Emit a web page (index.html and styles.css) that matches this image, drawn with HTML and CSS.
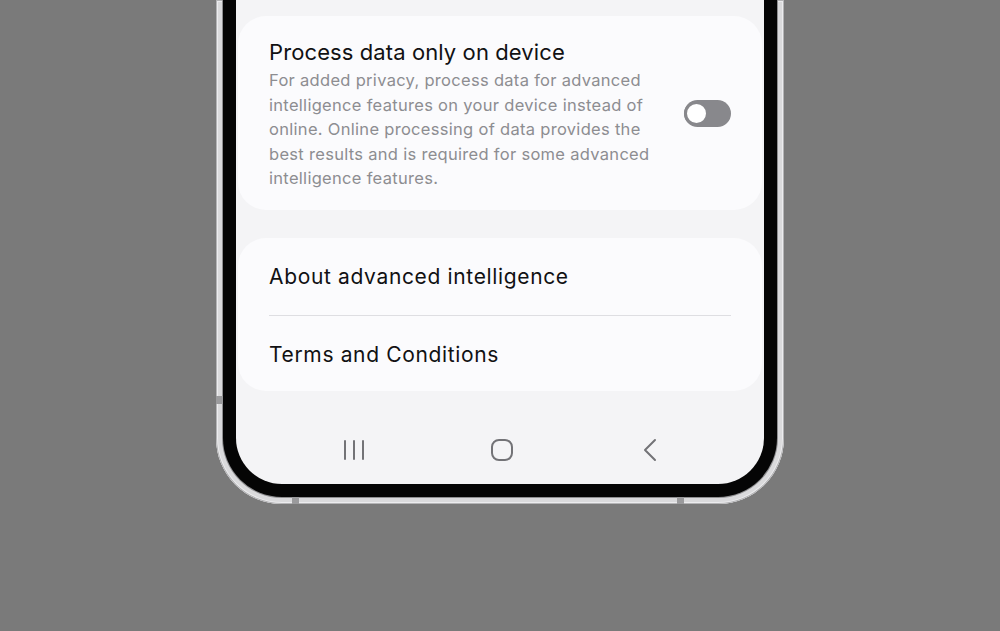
FILE: index.html
```html
<!DOCTYPE html>
<html lang="en">
<head>
<meta charset="utf-8">
<title>Advanced intelligence</title>
<link rel="stylesheet" href="styles.css">
</head>
<body>
<div class="stage">
  <div class="phone">
    <span class="mark mark-side"></span>
    <span class="mark mark-bl"></span>
    <span class="mark mark-br"></span>
    <div class="bezel">
      <div class="screen">
        <section class="card card-setting">
          <div class="setting-text">
            <h2 class="setting-title">Process data only on device</h2>
            <p class="setting-desc">For added privacy, process data for advanced intelligence features on your device instead of online. Online processing of data provides the best results and is required for some advanced intelligence features.</p>
          </div>
          <div class="toggle" role="switch" aria-checked="false"><span class="knob"></span></div>
        </section>
        <section class="card card-links">
          <div class="link-row">About advanced intelligence</div>
          <div class="divider"></div>
          <div class="link-row">Terms and Conditions</div>
        </section>
        <nav class="navbar">
          <span class="nav-btn">
            <svg width="28" height="24" viewBox="0 0 28 24"><g stroke="#737377" stroke-width="2" stroke-linecap="round"><line x1="5" y1="3" x2="5" y2="21"/><line x1="14" y1="3" x2="14" y2="21"/><line x1="23" y1="3" x2="23" y2="21"/></g></svg>
          </span>
          <span class="nav-btn">
            <svg width="28" height="24" viewBox="0 0 28 24"><rect x="4" y="2" width="20" height="20" rx="7" fill="none" stroke="#737377" stroke-width="2"/></svg>
          </span>
          <span class="nav-btn">
            <svg width="28" height="24" viewBox="0 0 28 24"><polyline points="19,2 9,12 19,22" fill="none" stroke="#737377" stroke-width="2" stroke-linecap="round" stroke-linejoin="round"/></svg>
          </span>
        </nav>
      </div>
    </div>
  </div>
</div>
</body>
</html>
```

FILE: styles.css
```css
html, body {
  margin: 0;
  padding: 0;
}
body {
  background: #7a7a7a;
  width: 1000px;
  height: 631px;
  overflow: hidden;
  font-family: Inter, Roboto, "Noto Sans", "Liberation Sans", sans-serif;
}
.stage {
  display: flex;
  justify-content: center;
}
.phone {
  position: relative;
  width: 568px;
  height: 504px;
  box-sizing: border-box;
  padding: 0 7px 7px 7px;
  background: #dadadc;
  border-radius: 0 0 66px 66px;
  box-shadow: inset 0 0 0 1px #b4b4b6, inset 0 0 0 2px #ececee;
}
.mark {
  position: absolute;
  background: #9a9a9c;
}
.mark-side {
  left: 0;
  top: 396px;
  width: 7px;
  height: 8px;
}
.mark-bl {
  left: 76px;
  bottom: 0;
  width: 7px;
  height: 7px;
}
.mark-br {
  right: 100px;
  bottom: 0;
  width: 7px;
  height: 7px;
}
.bezel {
  height: 100%;
  box-sizing: border-box;
  padding: 0 13px 13px 13px;
  background: #050505;
  border-radius: 0 0 59px 59px;
  box-shadow: 0 0 0 1px #8f8f91;
}
.screen {
  height: 100%;
  background: #f4f4f6;
  border-radius: 0 0 46px 46px;
  overflow: hidden;
  display: flex;
  flex-direction: column;
  padding: 16px 2px 0 2px;
  box-sizing: border-box;
}
.card {
  background: #fbfbfd;
  border-radius: 28px;
}
.card-setting {
  display: flex;
  align-items: center;
  padding: 22px 31px 19px 31px;
}
.setting-text {
  width: 388px;
  flex: none;
}
.setting-title {
  margin: 0 0 2px 0;
  font-size: 22px;
  line-height: 28px;
  font-weight: 400;
  color: #111113;
  letter-spacing: 0.1px;
}
.setting-desc {
  margin: 0;
  font-size: 16.5px;
  line-height: 24.5px;
  color: #8d8d91;
  letter-spacing: 0.3px;
}
.toggle {
  flex: none;
  margin-left: auto;
  margin-top: -2px;
  width: 47px;
  height: 27px;
  border-radius: 14px;
  background: #88888c;
  position: relative;
}
.knob {
  position: absolute;
  top: 1px;
  left: 0;
  width: 19px;
  height: 19px;
  border: 3px solid #88888c;
  border-radius: 50%;
  background: #ffffff;
}
.card-links {
  margin-top: 28px;
  padding: 0 31px;
}
.link-row {
  height: 77px;
  display: flex;
  align-items: center;
  font-size: 21px;
  color: #111113;
  letter-spacing: 0.65px;
}
.divider {
  height: 1px;
  background: #dedee2;
}
.link-row + .divider + .link-row {
  height: 75px;
  padding-top: 2px;
  box-sizing: border-box;
}
.navbar {
  margin-top: auto;
  height: 66px;
  display: flex;
  justify-content: center;
  align-items: center;
  gap: 120px;
  padding-left: 4px;
  padding-bottom: 1px;
}
.nav-btn {
  width: 28px;
  height: 24px;
  display: flex;
}
```
